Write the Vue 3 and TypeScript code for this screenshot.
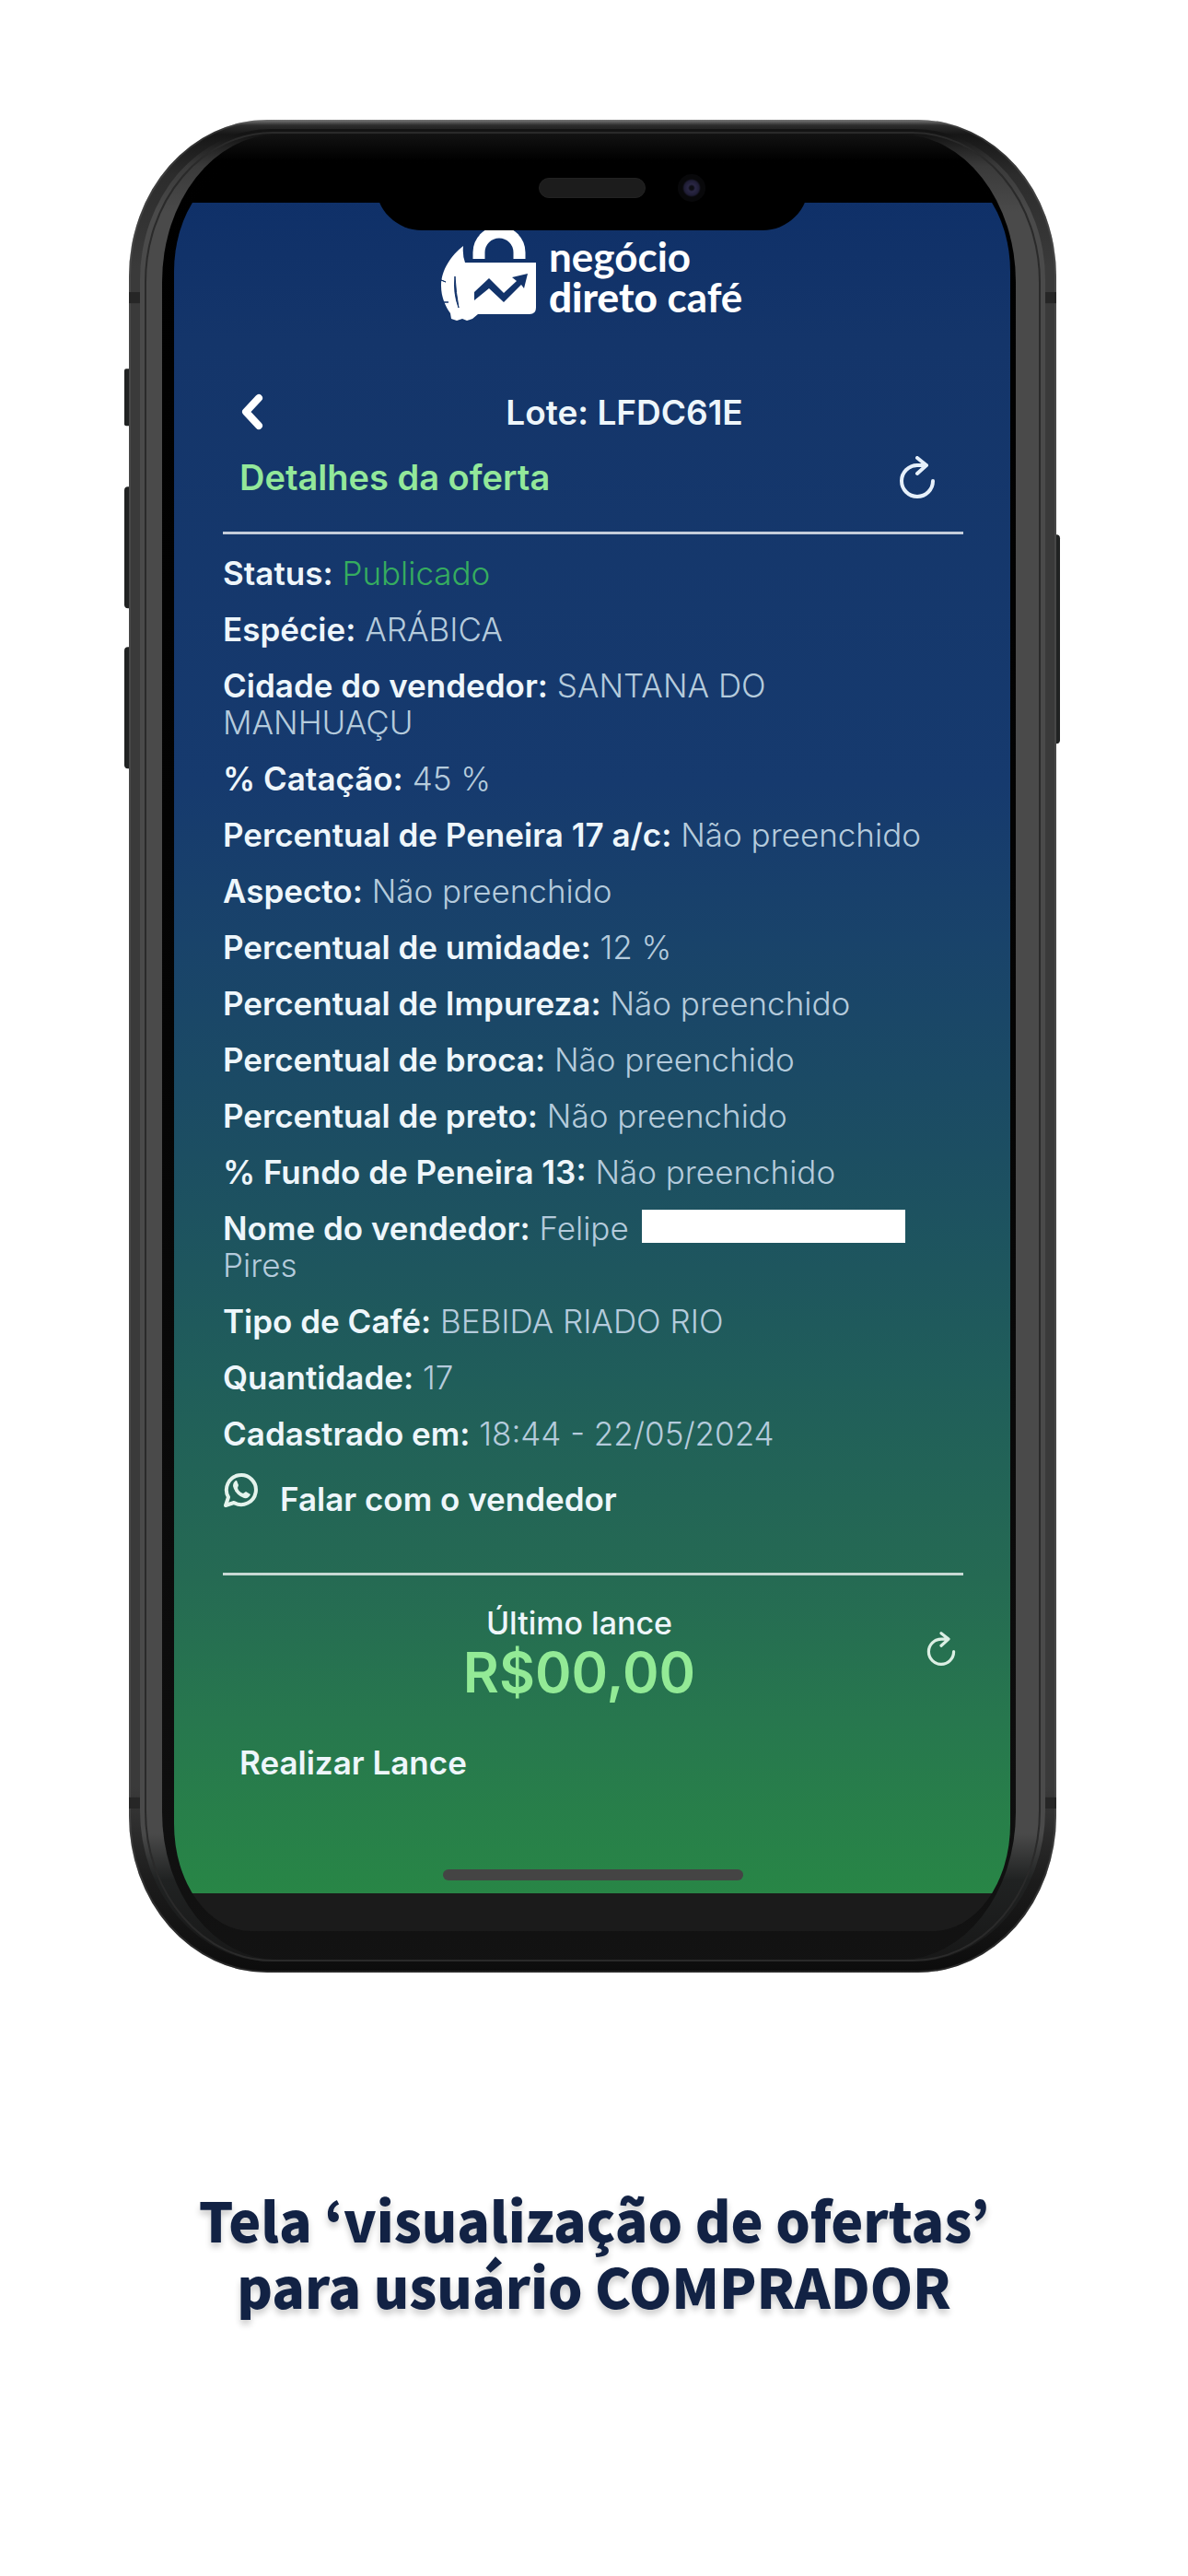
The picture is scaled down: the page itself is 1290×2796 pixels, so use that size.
<script setup lang="ts">
interface Detail {
  label: string
  value: string
  tone?: 'ok'
  masked?: boolean
  rest?: string
}

const lot = 'LFDC61E'
const empty = 'Não preenchido'

const details: Detail[] = [
  { label: 'Status:', value: 'Publicado', tone: 'ok' },
  { label: 'Espécie:', value: 'ARÁBICA' },
  { label: 'Cidade do vendedor:', value: 'SANTANA DO MANHUAÇU' },
  { label: '% Catação:', value: '45 %' },
  { label: 'Percentual de Peneira 17 a/c:', value: empty },
  { label: 'Aspecto:', value: empty },
  { label: 'Percentual de umidade:', value: '12 %' },
  { label: 'Percentual de Impureza:', value: empty },
  { label: 'Percentual de broca:', value: empty },
  { label: 'Percentual de preto:', value: empty },
  { label: '% Fundo de Peneira 13:', value: empty },
  { label: 'Nome do vendedor:', value: 'Felipe', masked: true, rest: 'Pires' },
  { label: 'Tipo de Café:', value: 'BEBIDA RIADO RIO' },
  { label: 'Quantidade:', value: '17' },
  { label: 'Cadastrado em:', value: '18:44 - 22/05/2024' },
]
</script>

<template>
  <main class="page">
    <section class="phone">
      <svg class="body" viewBox="0 0 1007 2010" preserveAspectRatio="none" aria-hidden="true">
        <defs>
          <linearGradient id="shell" gradientUnits="userSpaceOnUse" x1="0" y1="0" x2="0" y2="2010">
            <stop offset="0" stop-color="#7a7a7a" />
            <stop offset="0.003" stop-color="#2c2c2c" />
            <stop offset="0.008" stop-color="#161616" />
            <stop offset="0.03" stop-color="#2c2c2c" />
            <stop offset="0.08" stop-color="#3a3a3a" />
            <stop offset="0.9" stop-color="#3a3a3a" />
            <stop offset="0.95" stop-color="#1c1c1c" />
            <stop offset="1" stop-color="#0c0c0c" />
          </linearGradient>
          <linearGradient id="rail" gradientUnits="userSpaceOnUse" x1="0" y1="0" x2="0" y2="2010">
            <stop offset="0.008" stop-color="#141414" />
            <stop offset="0.025" stop-color="#3a3a3a" />
            <stop offset="0.05" stop-color="#4a4a4a" />
            <stop offset="0.925" stop-color="#4a4a4a" />
            <stop offset="0.95" stop-color="#202222" />
            <stop offset="1" stop-color="#161616" />
          </linearGradient>
          <linearGradient id="glass" gradientUnits="userSpaceOnUse" x1="0" y1="0" x2="0" y2="2010">
            <stop offset="0.008" stop-color="#121212" />
            <stop offset="0.022" stop-color="#000" />
            <stop offset="0.5" stop-color="#040404" />
            <stop offset="0.9" stop-color="#0e0e0e" />
            <stop offset="1" stop-color="#131313" />
          </linearGradient>
        </defs>
        <g fill="#202222">
          <rect x="-5" y="270" width="9" height="62" rx="2" />
          <rect x="-5" y="398" width="9" height="132" rx="4" />
          <rect x="-5" y="572" width="9" height="132" rx="4" />
          <rect x="1002" y="450" width="9" height="227" rx="4" />
        </g>
        <rect width="1007" height="2010" rx="150" ry="170" fill="url(#shell)" />
        <rect x="1" y="1" width="1005" height="2008" rx="149" ry="169" fill="none" stroke="#666" stroke-opacity="0.3" stroke-width="2" />
        <rect x="12" y="10" width="983" height="1988" rx="142" ry="164" fill="url(#rail)" />
        <rect x="18" y="14" width="971" height="1983" rx="138" ry="162" fill="none" stroke="#2a2a2a" stroke-width="2" />
        <rect x="36" y="16" width="927" height="1980" rx="125" ry="160" fill="url(#glass)" />
        <g fill="#262626">
          <rect x="0" y="187" width="12" height="12" />
          <rect x="995" y="187" width="12" height="12" />
          <rect x="0" y="1820" width="12" height="12" />
          <rect x="995" y="1820" width="12" height="12" />
        </g>
      </svg>

      <div class="screen">
        <div class="notch" aria-hidden="true">
          <span class="speaker"></span>
          <span class="camera"></span>
        </div>

        <header class="brand">
          <svg class="brand-mark" viewBox="0 0 104 98" aria-hidden="true">
            <path d="M42 31V24a22 22 0 0 1 44 0V31" fill="none" stroke="#fff" stroke-width="13" />
            <path
              d="M25 17C12 27 1 43 1 60C1 73 6 83 11 90L12 96L18 98L24 96L29 98L35 96L41 91H97Q104 91 104 84V35H27Q24 27 25 17Z"
              fill="#fff"
            />
            <path d="M37 67L53 52L69 68L83 55L78 51L95 47L91 63L88 59L69 78L53 63L37 76Z" fill="#12336a" />
            <path
              d="M16 50Q14 68 20 84Q17 68 16 50ZM1 54L6 56ZM2 78L9 78Z"
              fill="#12336a"
              stroke="#12336a"
            />
          </svg>
          <div class="brand-name">
            <span>negócio</span>
            <span><b>direto</b> café</span>
          </div>
        </header>

        <div class="topbar">
          <button class="back" type="button" aria-label="Voltar">
            <svg viewBox="0 0 24 40" width="24" height="40" fill="none" stroke="#fff" stroke-width="8" stroke-linecap="round" stroke-linejoin="round">
              <path d="M19 5L5 20L19 35" />
            </svg>
          </button>
          <h1>Lote: {{ lot }}</h1>
        </div>

        <div class="heading">
          <h2>Detalhes da oferta</h2>
          <button type="button" aria-label="Atualizar oferta">
            <svg viewBox="0 0 40 46" width="40" height="46" fill="none" stroke="#e6f0fa" stroke-width="4" stroke-linecap="round" stroke-linejoin="round">
              <path d="M37 27A17 17 0 1 1 20 10H30M20 2L30 10L20 19" />
            </svg>
          </button>
        </div>

        <hr />

        <ul class="details">
          <li v-for="item in details" :key="item.label">
            <strong>{{ item.label }}</strong>&nbsp;<span :class="item.tone">{{ item.value }}</span>
            <template v-if="item.masked">&nbsp;<i class="mask"></i> {{ item.rest }}</template>
          </li>
        </ul>

        <a class="contact" href="#">
          <svg viewBox="0 0 40 40" width="40" height="40" fill="none" stroke="#e4f3ec" stroke-linecap="round" stroke-linejoin="round" aria-hidden="true">
            <path d="M3 37L6 28A16 16 0 1 1 12 34Z" stroke-width="4" />
            <path
              d="M14 10Q11 12 11 16Q13 25 23 29Q28 30 30 25L25 22L22 24Q17 22 16 18L17 15L15 10Z"
              fill="#e4f3ec"
              stroke="none"
            />
          </svg>
          <span>Falar com o vendedor</span>
        </a>

        <hr />

        <div class="bid">
          <div class="bid-text">
            <p>Último lance</p>
            <p class="amount">R$00,00</p>
          </div>
          <button type="button" aria-label="Atualizar lance">
            <svg viewBox="0 0 40 46" width="32" height="37" fill="none" stroke="#dcefe4" stroke-width="4" stroke-linecap="round" stroke-linejoin="round">
              <path d="M37 27A17 17 0 1 1 20 10H30M20 2L30 10L20 19" />
            </svg>
          </button>
        </div>

        <button class="place-bid" type="button">Realizar Lance</button>

        <div class="home-bar"></div>
      </div>
    </section>

    <p class="caption">Tela ‘visualização de ofertas’<br />para usuário COMPRADOR</p>
  </main>
</template>

<style>
body {
  margin: 0;
  background: #fff;
}
</style>

<style scoped>
.page {
  padding: 130px 0 240px;
  font-family: Inter, 'Open Sans', sans-serif;
  color: #eef6fb;
}

h1,
h2,
p,
ul {
  margin: 0;
  padding: 0;
}

button {
  display: flex;
  padding: 0;
  border: 0;
  background: none;
  color: inherit;
  font: inherit;
}

svg {
  display: block;
  flex: none;
}

.phone {
  position: relative;
  margin: 0 143px 0 140px;
  padding: 49px 50px 45px 49px;
}

.body {
  position: absolute;
  inset: 0;
  width: 100%;
  height: 100%;
  overflow: visible;
}

.screen {
  position: relative;
  padding: 71px 51px 55px 53px;
  border-radius: 84px / 116px;
  background:
    linear-gradient(#000, #000) top / 100% 41px no-repeat,
    linear-gradient(#1b1b1b, #1b1b1b) bottom / 100% 41px no-repeat,
    linear-gradient(
      #0e2f68 0%,
      #14356a 10%,
      #163a6e 35%,
      #19436a 44%,
      #1c4e62 56%,
      #205e5a 69%,
      #256a53 80%,
      #27774e 88%,
      #288646 98%
    );
}

.notch {
  position: absolute;
  top: 0;
  left: 50%;
  display: flex;
  justify-content: flex-end;
  align-items: flex-start;
  gap: 35px;
  box-sizing: border-box;
  width: 470px;
  height: 71px;
  margin-left: -235px;
  padding: 10px 112px 0 0;
  border-radius: 0 0 50px 50px;
  background: #000;
}

.speaker {
  width: 114px;
  height: 20px;
  margin-top: 4px;
  border: 1px solid #222;
  border-radius: 11px;
  background: #1c1c1c;
}

.camera {
  width: 30px;
  height: 30px;
  border-radius: 50%;
  background: radial-gradient(circle, #0d0d14 2px, #2a2744 4px, #1f1d35 8px, #08080a 10px);
}

.brand {
  display: flex;
  gap: 14px;
  padding-left: 236px;
}

.brand-mark {
  width: 104px;
  height: 98px;
}

.brand-name {
  display: flex;
  flex-direction: column;
  padding-top: 6px;
  font: 700 44px/44px Lato, sans-serif;
  color: #fff;
}

.brand-name b {
  font-weight: 900;
}

.topbar {
  display: flex;
  align-items: center;
  height: 44px;
  margin-top: 77px;
}

.back {
  width: 68px;
  padding-left: 20px;
}

.topbar h1 {
  flex: 1;
  text-align: center;
  font-size: 37px;
  font-weight: 600;
}

.heading {
  display: flex;
  justify-content: space-between;
  align-items: center;
  margin-top: 26px;
  padding: 0 30px 0 18px;
}

.heading h2 {
  font-size: 38px;
  font-weight: 600;
  line-height: 46px;
  color: #93e89a;
}

hr {
  height: 3px;
  margin: 36px 0 22px;
  border: 0;
  background: #fff;
  opacity: 0.75;
}

.details {
  padding-right: 16px;
  list-style: none;
  font-size: 35px;
  font-weight: 300;
  line-height: 40px;
  color: #b5cbdc;
}

.details li + li {
  margin-top: 21px;
}

.details strong {
  font-weight: 600;
  color: #eef6fb;
}

.details .ok {
  color: #35ad5f;
}

.mask {
  display: inline-block;
  width: 286px;
  height: 36px;
  margin: -2px 0 4px 4px;
  vertical-align: bottom;
  background: #fff;
}

.contact {
  display: flex;
  gap: 22px;
  margin-top: 21px;
  color: inherit;
  text-decoration: none;
  font-size: 35px;
  font-weight: 600;
}

.contact span {
  padding-top: 10px;
  line-height: 40px;
}

.contact + hr {
  margin: 60px 0 32px;
}

.bid {
  display: flex;
  align-items: flex-start;
  padding: 0 8px 0 10px;
}

.bid button {
  margin-top: 29px;
}

.bid-text {
  flex: 1;
  text-align: center;
  font-size: 34px;
  font-weight: 500;
  line-height: 40px;
}

.amount {
  font-size: 60px;
  font-weight: 600;
  line-height: 66px;
  color: #93ea96;
}

.place-bid {
  margin: 45px 0 0 18px;
  font-size: 35px;
  font-weight: 600;
  line-height: 40px;
}

.home-bar {
  width: 326px;
  height: 12px;
  margin: 96px auto 0;
  border-radius: 6px;
  background: #444;
}

.caption {
  margin-top: 232px;
  text-align: center;
  font: 900 59px/72px 'Noto Sans CJK KR', sans-serif;
  color: #122244;
  text-shadow: 0 5px 7px rgba(0, 0, 0, 0.2);
}
</style>
